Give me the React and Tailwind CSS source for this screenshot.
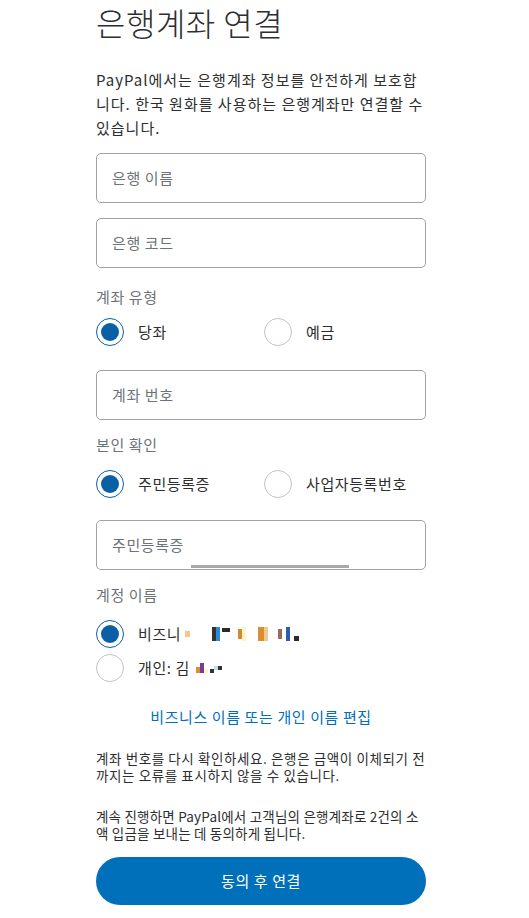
import React from "react";

const font = { fontFamily: '"Noto Sans CJK KR", "Noto Sans", sans-serif' };

function Field({ placeholder, bar }) {
  return (
    <div className="relative h-[50px] w-full rounded-[5px] border border-[#9da3a6] flex items-center px-[15px]">
      <span className="text-[15px] tracking-[0.6px] text-[#6c7378]">{placeholder}</span>
      {bar && (
        <div className="absolute bottom-[1px] left-[94px] h-[3px] w-[158px] bg-[#a9a9a9]" />
      )}
    </div>
  );
}

function Radio({ checked, label, children }) {
  return (
    <div className="flex items-center gap-[14px]">
      {checked ? (
        <div className="h-[28px] w-[28px] rounded-full border-[1.5px] border-[#0b5fa5] flex items-center justify-center">
          <div className="h-[18px] w-[18px] rounded-full bg-[#0b5fa5]" />
        </div>
      ) : (
        <div className="h-[28px] w-[28px] rounded-full border border-[#c1c5c7]" />
      )}
      <span className="text-[15px] tracking-[0.6px] text-[#2c2e2f] flex items-center">
        {label}
        {children}
      </span>
    </div>
  );
}

export default function App() {
  return (
    <div className="w-[529px] h-[918px] bg-white overflow-hidden" style={font}>
      <div className="ml-[96px] w-[330px] flex flex-col">
        <h1 className="mt-[2px] text-[32px] font-light leading-[40px] tracking-[0.5px] text-[#2c2e2f]">
          은행계좌 연결
        </h1>
        <p className="mt-[26px] text-[15px] leading-[24px] tracking-[1px] text-[#2c2e2f]">
          PayPal에서는 은행계좌 정보를 안전하게 보호합니다. 한국 원화를 사용하는 은행계좌만 연결할 수 있습니다.
        </p>
        <div className="mt-[13px]">
          <Field placeholder="은행 이름" />
        </div>
        <div className="mt-[15px]">
          <Field placeholder="은행 코드" />
        </div>
        <div className="mt-[17px] text-[15px] leading-[24px] tracking-[0.6px] text-[#6c7378]">계좌 유형</div>
        <div className="mt-[9px] flex items-center">
          <div className="w-[168px]">
            <Radio checked label="당좌" />
          </div>
          <Radio label="예금" />
        </div>
        <div className="mt-[24px]">
          <Field placeholder="계좌 번호" />
        </div>
        <div className="mt-[13px] text-[15px] leading-[24px] tracking-[0.6px] text-[#6c7378]">본인 확인</div>
        <div className="mt-[13px] flex items-center">
          <div className="w-[168px]">
            <Radio checked label="주민등록증" />
          </div>
          <Radio label="사업자등록번호" />
        </div>
        <div className="mt-[22px]">
          <Field placeholder="주민등록증" bar />
        </div>
        <div className="mt-[13px] text-[15px] leading-[24px] tracking-[0.6px] text-[#6c7378]">계정 이름</div>
        <div className="mt-[13px]">
          <Radio checked label="비즈니">
            <span className="ml-[4px] inline-block h-[6px] w-[5px] bg-[#f5c98b]" />
            <span className="ml-[22px] inline-flex items-center">
              <span className="inline-block h-[14px] w-[4px] bg-[#333]" />
              <span className="inline-block h-[14px] w-[4px] bg-[#2d8ad6]" />
              <span className="inline-block h-[4px] w-[8px] bg-[#2a2a2a] ml-[2px] self-start mt-[1px]" />
              <span className="inline-block h-[10px] w-[4px] bg-[#d28a2a] ml-[8px]" />
              <span className="inline-block h-[14px] w-[4px] bg-[#fff3c8]" />
              <span className="inline-block h-[14px] w-[6px] bg-[#d9902f] ml-[12px]" />
              <span className="inline-block h-[14px] w-[4px] bg-[#f2c891]" />
              <span className="inline-block h-[10px] w-[4px] bg-[#9d6a63] ml-[10px]" />
              <span className="inline-block h-[14px] w-[4px] bg-[#2b5faa] ml-[4px]" />
              <span className="inline-block h-[5px] w-[5px] bg-[#2a2a2a] ml-[4px] self-end" />
            </span>
          </Radio>
        </div>
        <div className="mt-[6px]">
          <Radio label="개인: 김">
            <span className="ml-[6px] inline-flex items-end">
              <span className="inline-block h-[6px] w-[4px] bg-[#d9902f]" />
              <span className="inline-block h-[10px] w-[4px] bg-[#7b3a9a]" />
              <span className="inline-block h-[4px] w-[4px] bg-[#fff3c8]" />
              <span className="inline-block h-[4px] w-[4px] bg-[#333] ml-[2px]" />
              <span className="inline-block h-[4px] w-[4px] bg-[#b6e3f5] self-center" />
              <span className="inline-block h-[4px] w-[4px] bg-[#333] self-center" />
            </span>
          </Radio>
        </div>
        <div className="mt-[23px] text-center text-[15px] leading-[24px] tracking-[0.6px] text-[#0070ba]">
          비즈니스 이름 또는 개인 이름 편집
        </div>
        <p className="mt-[21px] text-[13.5px] leading-[17px] tracking-[0.6px] text-[#2c2e2f]">
          계좌 번호를 다시 확인하세요. 은행은 금액이 이체되기 전까지는 오류를 표시하지 않을 수 있습니다.
        </p>
        <p className="mt-[24px] text-[13.5px] leading-[17px] tracking-[0.2px] text-[#2c2e2f]">
          계속 진행하면 PayPal에서 고객님의 은행계좌로 2건의 소액 입금을 보내는 데 동의하게 됩니다.
        </p>
        <button className="mt-[15px] h-[48px] w-full rounded-full bg-[#0070ba] text-white text-[15px] tracking-[0.6px]">
          동의 후 연결
        </button>
      </div>
    </div>
  );
}
